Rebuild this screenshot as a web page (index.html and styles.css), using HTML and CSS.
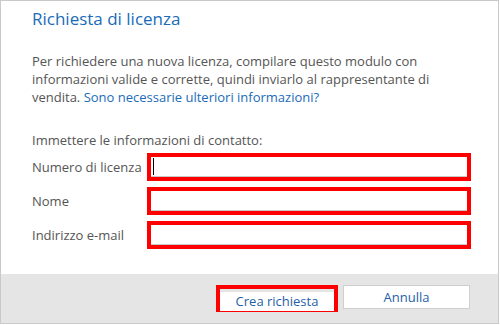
FILE: index.html
```html
<!DOCTYPE html>
<html lang="it">
<head>
    <meta charset="UTF-8">
    <title>Richiesta di licenza</title>
    <link rel="stylesheet" href="styles.css">
</head>
<body>

    <div class="dialog">
        <div class="content">
            <h1>Richiesta di licenza</h1>

            <p class="intro">
                Per richiedere una nuova licenza, compilare questo modulo con
                informazioni valide e corrette, quindi inviarlo al rappresentante di
                vendita. <a href="#">Sono necessarie ulteriori informazioni?</a>
            </p>

            <p class="hint">Immettere le informazioni di contatto:</p>

            <div class="form">
                <label>Numero di licenza</label>
                <div class="mark"><div class="field"><span class="caret"></span></div></div>

                <label>Nome</label>
                <div class="mark"><div class="field"></div></div>

                <label>Indirizzo e-mail</label>
                <div class="mark"><div class="field"></div></div>
            </div>
        </div>

        <div class="footer">
            <div class="mark mark-btn"><button class="btn">Crea richiesta</button></div>
            <button class="btn btn-plain">Annulla</button>
        </div>
    </div>

</body>
</html>
```

FILE: styles.css
```css
body {
    margin: 0;
    padding: 0;
    font-family: "Segoe UI", "Open Sans", sans-serif;
    background: #fff;
}

.dialog {
    width: 499px;
    height: 324px;
    box-sizing: border-box;
    border: 1px solid #c9c9c9;
    display: flex;
    flex-direction: column;
    background: #fff;
}

.content {
    padding: 6px 0 0 31px;
}

h1 {
    margin: 0;
    font-size: 17px;
    line-height: 24px;
    font-weight: normal;
    color: #1a6bb8;
}

.intro {
    margin: 21px 0 0;
    width: 420px;
    font-size: 13px;
    line-height: 18px;
    color: #555;
}

.intro a {
    color: #1a6bb8;
    text-decoration: none;
}

.hint {
    margin: 25px 0 0;
    font-size: 13px;
    line-height: 18px;
    color: #555;
}

.form {
    margin-top: 4px;
    display: grid;
    grid-template-columns: 115px 324px;
    grid-auto-rows: 28px;
    row-gap: 6px;
    align-items: center;
}

.form label {
    font-size: 13px;
    color: #555;
}

.mark {
    border: 4px solid #ff0000;
    height: 28px;
    box-sizing: border-box;
}

.field {
    height: 100%;
    box-sizing: border-box;
    border-bottom: 1px solid #c8c8c8;
    background: #fff;
    padding: 1px 2px;
}

.caret {
    display: inline-block;
    width: 1px;
    height: 17px;
    background: #000;
}

.footer {
    margin-top: auto;
    height: 49px;
    box-sizing: border-box;
    background: #e5e5e5;
    padding: 11px 28px 0 0;
    display: flex;
    justify-content: flex-end;
    align-items: flex-start;
    gap: 5px;
}

.btn {
    font-family: inherit;
    font-size: 13px;
    color: #1f5fa8;
    background: #fff;
    border: 1px solid #cfcfcf;
    width: 127px;
    height: 24px;
    padding: 0;
}

.mark-btn {
    width: 122px;
    height: 27px;
}

.mark-btn .btn {
    width: 100%;
    height: 100%;
    border: none;
}
```
